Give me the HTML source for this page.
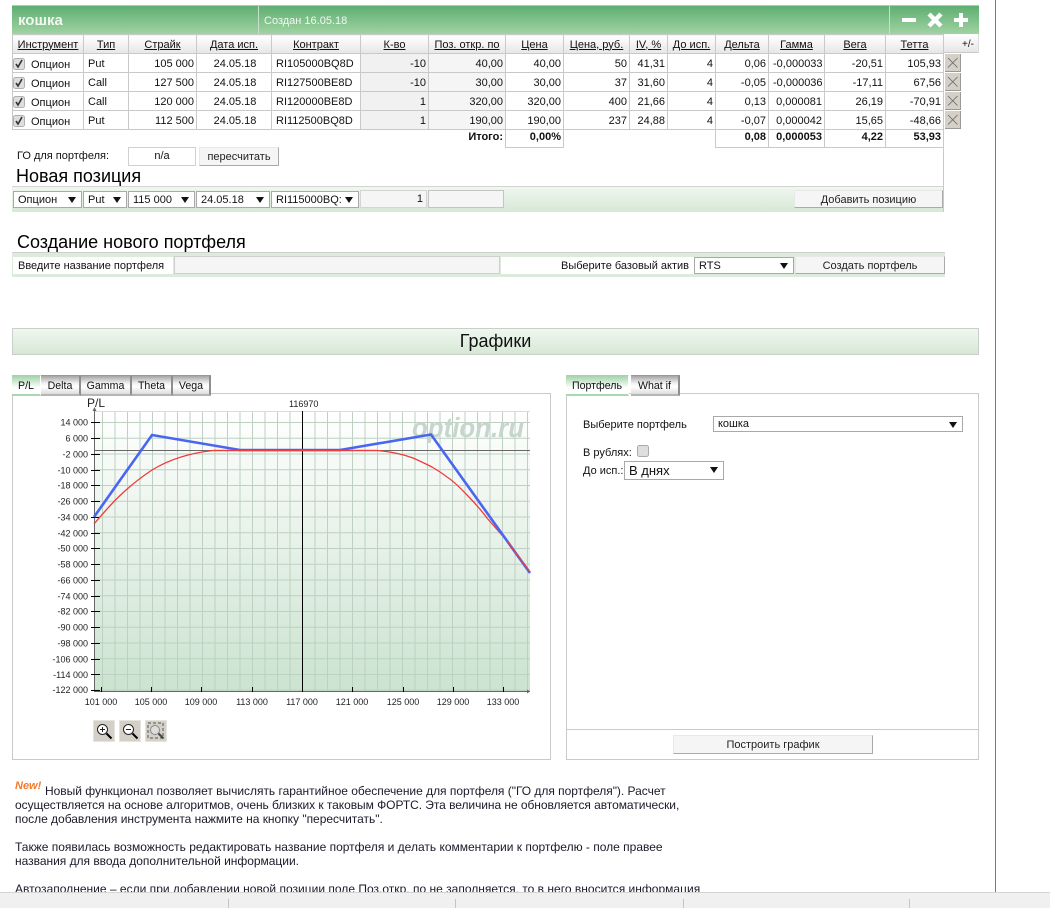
<!DOCTYPE html>
<html lang="ru"><head><meta charset="utf-8"><title>Портфель</title>
<style>
html,body{margin:0;padding:0;background:#fff}
body{width:1050px;height:908px;overflow:hidden;position:relative;font:11px/14px "Liberation Sans",sans-serif;color:#111}
.a{position:absolute;white-space:nowrap;box-sizing:border-box}
table{position:absolute;left:12px;top:34px;border-collapse:collapse;table-layout:fixed;width:931px}
td,th{border:1px solid #c9c9c9;padding:1px 2px 0 4px;font-size:11px;font-weight:normal;height:19px;line-height:14px;text-align:right;white-space:nowrap;overflow:hidden;box-sizing:border-box}
thead th{height:19px;text-align:center;text-decoration:underline;background:linear-gradient(#fff,#e6e6e6);padding:1px 0 0}
td.l{text-align:left}td.c{text-align:center}
td.o{padding:3px 0 0 18px;text-align:left}
td.g{background:#f1f1f1;border-top:1px solid #aaa;border-left:1px solid #999}
td.h{background:#f5f5f5}
td.n{border:none}
tr.t td{font-weight:bold;height:18px;padding-top:0;padding-bottom:3px;border-top:1px solid #c9c9c9}
tr.t td.n{border:none}
.sel{position:absolute;height:17px;background:#fff;border:1px solid #a9a9a9;box-sizing:border-box;padding:0 4px;line-height:16px;font-size:11px;white-space:nowrap;overflow:hidden}
.sel:after{content:"";position:absolute;right:5px;top:5px;border:4px solid transparent;border-top:6px solid #111;border-bottom:0}
.btn{position:absolute;background:#f5f5f5;border-right:1px solid #aaa;border-bottom:1px solid #aaa;border-top:1px solid #e8e8e8;border-left:1px solid #e8e8e8;box-sizing:border-box;text-align:center;font-size:11px;line-height:18px;color:#222}
.x{position:absolute;left:945px;width:16px;height:18px;background:#d4d0c8;border-right:1px solid #999;border-bottom:1px solid #999;box-sizing:border-box}
.tab{position:absolute;top:375px;height:21px;box-sizing:border-box;text-align:center;font-size:10.6px;line-height:21px;background:linear-gradient(#a5a5a5,#f0f0f0 40%,#fff 60%,#dcdcdc);border-right:2px solid #8e8e8e;border-bottom:2px solid #b5b5b5;border-top:1px solid #999}
.tab.on{background:linear-gradient(#a3d4a8,#fff 65%);border-right:1px solid #fff;border-bottom:2px solid #a8d8ae;border-top:1px solid #a3d4a8}
.panel{position:absolute;border:1px solid #cacaca;box-sizing:border-box;background:#fff}
.zb{position:absolute;top:720px;width:22px;height:22px;background:#d4d0c8;border:1px solid #e6e4de;box-sizing:border-box}
p{position:absolute;left:15px;margin:0;font-size:12px;line-height:14px;white-space:nowrap;color:#1a1a2a;letter-spacing:-.02px}
</style></head><body>

<!-- title bar -->
<div class="a" style="left:12px;top:5px;width:967px;height:29px;background:linear-gradient(#5fae72,#a0d3a2);border-top:1px solid #a9cdb0"></div>
<div class="a" style="left:258px;top:6px;width:1px;height:28px;background:#c8e0c8"></div>
<div class="a" style="left:889px;top:6px;width:1px;height:28px;background:#c8e0c8"></div>
<div class="a" style="left:18px;top:12px;font-size:15px;line-height:17px;font-weight:bold;color:#f0f8f0">кошка</div>
<div class="a" style="left:264px;top:14px;font-size:11px;color:#f2f8f2">Создан 16.05.18</div>
<svg class="a" style="left:895px;top:8px" width="80" height="24" viewBox="0 0 80 24"><path d="M7 10h14v4H7z" fill="#fff"/><path d="M34 6l12 12M46 6L34 18" stroke="#fff" stroke-width="4.4" fill="none"/><path d="M59 10h5V5h4v5h5v4h-5v5h-4v-5h-5z" fill="#fff"/></svg>
<div class="a" style="left:943px;top:34px;width:36px;height:19px;background:linear-gradient(#fff,#e6e6e6);border-bottom:1px solid #c9c9c9;border-right:1px solid #ddd;text-align:right;padding-right:4px;line-height:21px;font-size:10px">+/-</div>

<table>
<colgroup><col style="width:71px"><col style="width:45px"><col style="width:68px"><col style="width:75px"><col style="width:89px"><col style="width:68px"><col style="width:77px"><col style="width:58px"><col style="width:66px"><col style="width:38px"><col style="width:48px"><col style="width:53px"><col style="width:56px"><col style="width:61px"><col style="width:58px"></colgroup>
<thead><tr><th>Инструмент</th><th>Тип</th><th>Страйк</th><th>Дата исп.</th><th>Контракт</th><th>К-во</th><th>Поз. откр. по</th><th>Цена</th><th>Цена, руб.</th><th>IV, %</th><th>До исп.</th><th>Дельта</th><th>Гамма</th><th>Вега</th><th>Тетта</th></tr></thead>
<tbody>
<tr><td class="o">Опцион</td><td class="l">Put</td><td>105 000</td><td class="c">24.05.18</td><td class="l">RI105000BQ8D</td><td class="g">-10</td><td class="h">40,00</td><td>40,00</td><td>50</td><td>41,31</td><td>4</td><td>0,06</td><td>-0,000033</td><td>-20,51</td><td>105,93</td></tr>
<tr><td class="o">Опцион</td><td class="l">Call</td><td>127 500</td><td class="c">24.05.18</td><td class="l">RI127500BE8D</td><td class="g">-10</td><td class="h">30,00</td><td>30,00</td><td>37</td><td>31,60</td><td>4</td><td>-0,05</td><td>-0,000036</td><td>-17,11</td><td>67,56</td></tr>
<tr><td class="o">Опцион</td><td class="l">Call</td><td>120 000</td><td class="c">24.05.18</td><td class="l">RI120000BE8D</td><td class="g">1</td><td class="h">320,00</td><td>320,00</td><td>400</td><td>21,66</td><td>4</td><td>0,13</td><td>0,000081</td><td>26,19</td><td>-70,91</td></tr>
<tr><td class="o">Опцион</td><td class="l">Put</td><td>112 500</td><td class="c">24.05.18</td><td class="l">RI112500BQ8D</td><td class="g">1</td><td class="h">190,00</td><td>190,00</td><td>237</td><td>24,88</td><td>4</td><td>-0,07</td><td>0,000042</td><td>15,65</td><td>-48,66</td></tr>
<tr class="t"><td class="n"></td><td class="n"></td><td class="n"></td><td class="n"></td><td class="n"></td><td class="n"></td><td class="n">Итого:</td><td>0,00%</td><td class="n"></td><td class="n"></td><td class="n" style="border-right:1px solid #c9c9c9"></td><td>0,08</td><td>0,000053</td><td>4,22</td><td>53,93</td></tr>
</tbody></table>

<svg class="a" style="left:13px;top:58px" width="12" height="70" viewBox="0 0 12 70">
<g><rect x=".5" y=".5" width="11" height="11" rx="2" fill="#dedede" stroke="#b0b0b0"/><path d="M3 6l2 3 4-7" stroke="#333" stroke-width="1.6" fill="none"/></g>
<g transform="translate(0,19)"><rect x=".5" y=".5" width="11" height="11" rx="2" fill="#dedede" stroke="#b0b0b0"/><path d="M3 6l2 3 4-7" stroke="#333" stroke-width="1.6" fill="none"/></g>
<g transform="translate(0,38)"><rect x=".5" y=".5" width="11" height="11" rx="2" fill="#dedede" stroke="#b0b0b0"/><path d="M3 6l2 3 4-7" stroke="#333" stroke-width="1.6" fill="none"/></g>
<g transform="translate(0,57)"><rect x=".5" y=".5" width="11" height="11" rx="2" fill="#dedede" stroke="#b0b0b0"/><path d="M3 6l2 3 4-7" stroke="#333" stroke-width="1.6" fill="none"/></g>
</svg>

<svg class="x" style="top:54px" viewBox="0 0 15 17"><path d="M3 4l9.500 9.500M12.500 4L3 13.500" stroke="#666" stroke-width=".8" fill="none"/></svg>
<svg class="x" style="top:73px" viewBox="0 0 15 17"><path d="M3 4l9.500 9.500M12.500 4L3 13.500" stroke="#666" stroke-width=".8" fill="none"/></svg>
<svg class="x" style="top:92px" viewBox="0 0 15 17"><path d="M3 4l9.500 9.500M12.500 4L3 13.500" stroke="#666" stroke-width=".8" fill="none"/></svg>
<svg class="x" style="top:111px" viewBox="0 0 15 17"><path d="M3 4l9.500 9.500M12.500 4L3 13.500" stroke="#666" stroke-width=".8" fill="none"/></svg>

<div class="a" style="left:943px;top:129px;width:1px;height:83px;background:#c9c9c9"></div>

<!-- GO -->
<div class="a" style="left:17px;top:149px">ГО для портфеля:</div>
<div class="a" style="left:128px;top:147px;width:68px;height:19px;border:1px solid #d0d0d0;text-align:center;line-height:16px">n/a</div>
<div class="btn" style="left:199px;top:147px;width:80px;height:19px;line-height:19px">пересчитать</div>
<div class="a" style="left:16px;top:166px;font-size:18px;line-height:21px;color:#000">Новая позиция</div>

<!-- new position -->
<div class="a" style="left:12px;top:186px;width:931px;height:26px;background:linear-gradient(#f0f7f0,#d6e8d6);border-top:1px solid #d4d4d4"></div>
<div class="sel" style="left:13px;top:191px;width:69px">Опцион</div>
<div class="sel" style="left:83px;top:191px;width:44px">Put</div>
<div class="sel" style="left:128px;top:191px;width:67px">115 000</div>
<div class="sel" style="left:196px;top:191px;width:74px">24.05.18</div>
<div class="sel" style="left:271px;top:191px;width:88px">RI115000BQ:</div>
<div class="a" style="left:360px;top:190px;width:67px;height:18px;background:#f5f5f5;border:1px solid #d4d4d4;text-align:right;padding-right:3px;line-height:17px">1</div>
<div class="a" style="left:428px;top:190px;width:76px;height:18px;background:#f5f5f5;border:1px solid #c4c4c4"></div>
<div class="btn" style="left:794px;top:190px;width:149px;height:18px">Добавить позицию</div>

<!-- create -->
<div class="a" style="left:17px;top:232px;font-size:18px;line-height:21px;color:#000">Создание нового портфеля</div>
<div class="a" style="left:12px;top:252px;width:933px;height:25px;background:#dcebdc;border-top:1px solid #d0d0d0"></div>
<div class="a" style="left:13px;top:257px;width:160px;height:17px;background:#fff;padding-left:5px;line-height:18px">Введите название портфеля</div>
<div class="a" style="left:174px;top:256px;width:326px;height:18px;background:#f5f5f5;border:1px solid #cfcfcf"></div>
<div class="a" style="left:501px;top:257px;width:193px;height:17px;background:#fff;text-align:right;padding-right:5px;line-height:18px">Выберите базовый актив</div>
<div class="sel" style="left:694px;top:257px;width:100px">RTS</div>
<div class="btn" style="left:795px;top:256px;width:150px;height:18px">Создать портфель</div>

<!-- charts bar -->
<div class="a" style="left:12px;top:328px;width:967px;height:27px;background:linear-gradient(#f0f7f0,#d6e8d6);border:1px solid #c9cfc9;text-align:center;font-size:18px;line-height:24px;color:#111">Графики</div>

<!-- left panel -->
<div class="panel" style="left:12px;top:393px;width:539px;height:367px"></div>
<div class="tab on" style="left:12px;width:29px">P/L</div>
<div class="tab" style="left:41px;width:40px">Delta</div>
<div class="tab" style="left:81px;width:51px">Gamma</div>
<div class="tab" style="left:132px;width:41px">Theta</div>
<div class="tab" style="left:173px;width:38px">Vega</div>

<svg class="a" style="left:0;top:396px" width="552" height="312" viewBox="0 396 552 312" font-family="Liberation Sans, sans-serif" font-size="9" fill="#222">
<defs>
<linearGradient id="bg" x1="0" y1="0" x2="0" y2="1"><stop offset="0" stop-color="#ffffff"/><stop offset="1" stop-color="#cbe3cf"/></linearGradient>
<pattern id="gx" patternUnits="userSpaceOnUse" x="102" y="0" width="12.5" height="10"><rect x="0" y="0" width="1" height="10" fill="#bdd0c2"/></pattern>
<pattern id="gy" patternUnits="userSpaceOnUse" x="0" y="422" width="10" height="15.75"><rect x="0" y="0" width="10" height="1" fill="#bdd0c2"/></pattern>
</defs>
<rect x="94" y="411" width="436" height="280" fill="url(#bg)"/>
<rect x="102" y="411" width="428" height="280" fill="url(#gx)"/>
<rect x="94" y="422" width="436" height="269" fill="url(#gy)"/>
<rect x="94" y="411" width="436" height="1" fill="#d5e0d8"/>
<text x="412" y="437" font-size="28" font-weight="bold" font-style="italic" fill="#c6d6cd" textLength="112" lengthAdjust="spacingAndGlyphs">option.ru</text>
<path d="M94.500 408V691.500H530M94 450.500H530" stroke="#666" fill="none"/>
<path d="M92.500 411l2-4 2 4z" fill="#666"/><path d="M527 689.500l3 2-3 2z" fill="#666"/>
<path d="M302.500 411V692" stroke="#000"/>
<path d="M91 422.500h9M91 438.500h9M91 454.500h9M91 470.500h9M91 485.500h9M91 501.500h9M91 517.500h9M91 533.500h9M91 548.500h9M91 564.500h9M91 580.500h9M91 596.500h9M91 611.500h9M91 627.500h9M91 643.500h9M91 659.500h9M91 674.500h9M91 690.500h9" stroke="#000"/>
<path d="M101.500 687v5M151.500 687v5M201.500 687v5M252.500 687v5M302.500 687v5M352.500 687v5M403.500 687v5M453.500 687v5M503.500 687v5" stroke="#000"/>
<path d="M94 524C110 505 125 488 152 470C170 459 190 453 213 450.500L377 450.500C395 452 405 455 413 458C420 461 426 464 432 467C437 470 442 473 447 477C455 482 461 489 467 495C474 502 481 510 487 518C494 526 500 533 507 541L530 572" stroke="#ef3b3b" stroke-width="1.3" fill="none"/>
<path d="M94 517L152 435L240 450H340L431 434.500L530 573" stroke="#4a66f0" stroke-width="2.600" fill="none"/>
<path d="M213 450.500H377M507 541L530 572" stroke="#ef3b3b" stroke-width="1.3" fill="none"/>
<text x="87" y="407" font-size="12">P/L</text>
<text x="289" y="407">116970</text>
<g text-anchor="end">
<text x="88" y="425.500">14 000</text><text x="88" y="441.500">6 000</text><text x="88" y="457.500">-2 000</text><text x="88" y="473.500">-10 000</text><text x="88" y="488.500">-18 000</text><text x="88" y="504.500">-26 000</text><text x="88" y="520.500">-34 000</text><text x="88" y="536.500">-42 000</text><text x="88" y="551.500">-50 000</text><text x="88" y="567.500">-58 000</text><text x="88" y="583.500">-66 000</text><text x="88" y="599.500">-74 000</text><text x="88" y="614.500">-82 000</text><text x="88" y="630.500">-90 000</text><text x="88" y="646.500">-98 000</text><text x="88" y="662.500">-106 000</text><text x="88" y="678">-114 000</text><text x="88" y="693">-122 000</text>
</g>
<g text-anchor="middle">
<text x="101" y="705">101 000</text><text x="151" y="705">105 000</text><text x="201" y="705">109 000</text><text x="252" y="705">113 000</text><text x="302" y="705">117 000</text><text x="352" y="705">121 000</text><text x="403" y="705">125 000</text><text x="453" y="705">129 000</text><text x="503" y="705">133 000</text>
</g>
</svg>

<svg class="zb" style="left:93px" viewBox="0 0 20 20"><circle cx="8.500" cy="8.500" r="5" fill="#fff" stroke="#222"/><path d="M6 8.500h5M8.500 6v5" stroke="#222"/><path d="M12.500 12.500l5 5" stroke="#000" stroke-width="2"/></svg>
<svg class="zb" style="left:119px" viewBox="0 0 20 20"><circle cx="8.500" cy="8.500" r="5" fill="#fff" stroke="#222"/><path d="M6 8.500h5" stroke="#222"/><path d="M12.500 12.500l5 5" stroke="#000" stroke-width="2"/></svg>
<svg class="zb" style="left:145px" viewBox="0 0 20 20"><path d="M2 2h15v15H2z" fill="none" stroke="#555" stroke-dasharray="3 2"/><circle cx="9" cy="9" r="4.500" fill="#ddd" stroke="#888"/><path d="M12.500 12.500l5 5" stroke="#444" stroke-width="2"/></svg>

<!-- right panel -->
<div class="panel" style="left:566px;top:393px;width:413px;height:367px"></div>
<div class="a" style="left:566px;top:729px;width:413px;height:1px;background:#cacaca"></div>
<div class="tab on" style="left:566px;width:63px">Портфель</div>
<div class="tab" style="left:631px;width:49px">What if</div>
<div class="a" style="left:583px;top:418px">Выберите портфель</div>
<div class="sel" style="left:713px;top:416px;width:250px;height:16px;line-height:15px">кошка</div>
<div class="a" style="left:583px;top:446px">В рублях:</div>
<svg class="a" style="left:637px;top:445px" width="13" height="13"><rect x=".5" y=".5" width="11" height="11" rx="2" fill="#dedede" stroke="#aaa"/></svg>
<div class="a" style="left:583px;top:464px">До исп.:</div>
<div class="sel" style="left:624px;top:461px;width:100px;height:19px;font-size:13px;line-height:18px">В днях</div>
<div class="btn" style="left:673px;top:735px;width:200px;height:19px;line-height:19px">Построить график</div>

<!-- text -->
<div class="a" style="left:15px;top:780px;font:italic bold 11px/12px 'Liberation Sans',sans-serif;color:#f47a2a">New!</div>
<div class="a" style="left:0;top:770px;width:990px;height:122px;overflow:hidden">
<p style="left:45px;top:14px">Новый функционал позволяет вычислять гарантийное обеспечение для портфеля ("ГО для портфеля"). Расчет</p>
<p style="top:28px;letter-spacing:-.055px">осуществляется на основе алгоритмов, очень близких к таковым ФОРТС. Эта величина не обновляется автоматически,</p>
<p style="top:42px">после добавления инструмента нажмите на кнопку "пересчитать".</p>
<p style="top:70px;letter-spacing:0">Также появилась возможность редактировать название портфеля и делать комментарии к портфелю - поле правее</p>
<p style="top:84px">названия для ввода дополнительной информации.</p>
<p style="top:112px;letter-spacing:.01px">Автозаполнение – если при добавлении новой позиции поле Поз.откр. по не заполняется, то в него вносится информация</p>
</div>

<!-- right vertical rule and status bar -->
<div class="a" style="left:995px;top:0;width:1px;height:892px;background:#4c9a50"></div>
<div class="a" style="left:0;top:892px;width:1050px;height:16px;background:#f0f0f0;border-top:1px solid #d4d4d4"></div>
<div class="a" style="left:228px;top:899px;width:1px;height:9px;background:#c4c4c4"></div>
<div class="a" style="left:455px;top:899px;width:1px;height:9px;background:#c4c4c4"></div>
<div class="a" style="left:683px;top:899px;width:1px;height:9px;background:#c4c4c4"></div>
<div class="a" style="left:909px;top:899px;width:1px;height:9px;background:#c4c4c4"></div>
</body></html>
